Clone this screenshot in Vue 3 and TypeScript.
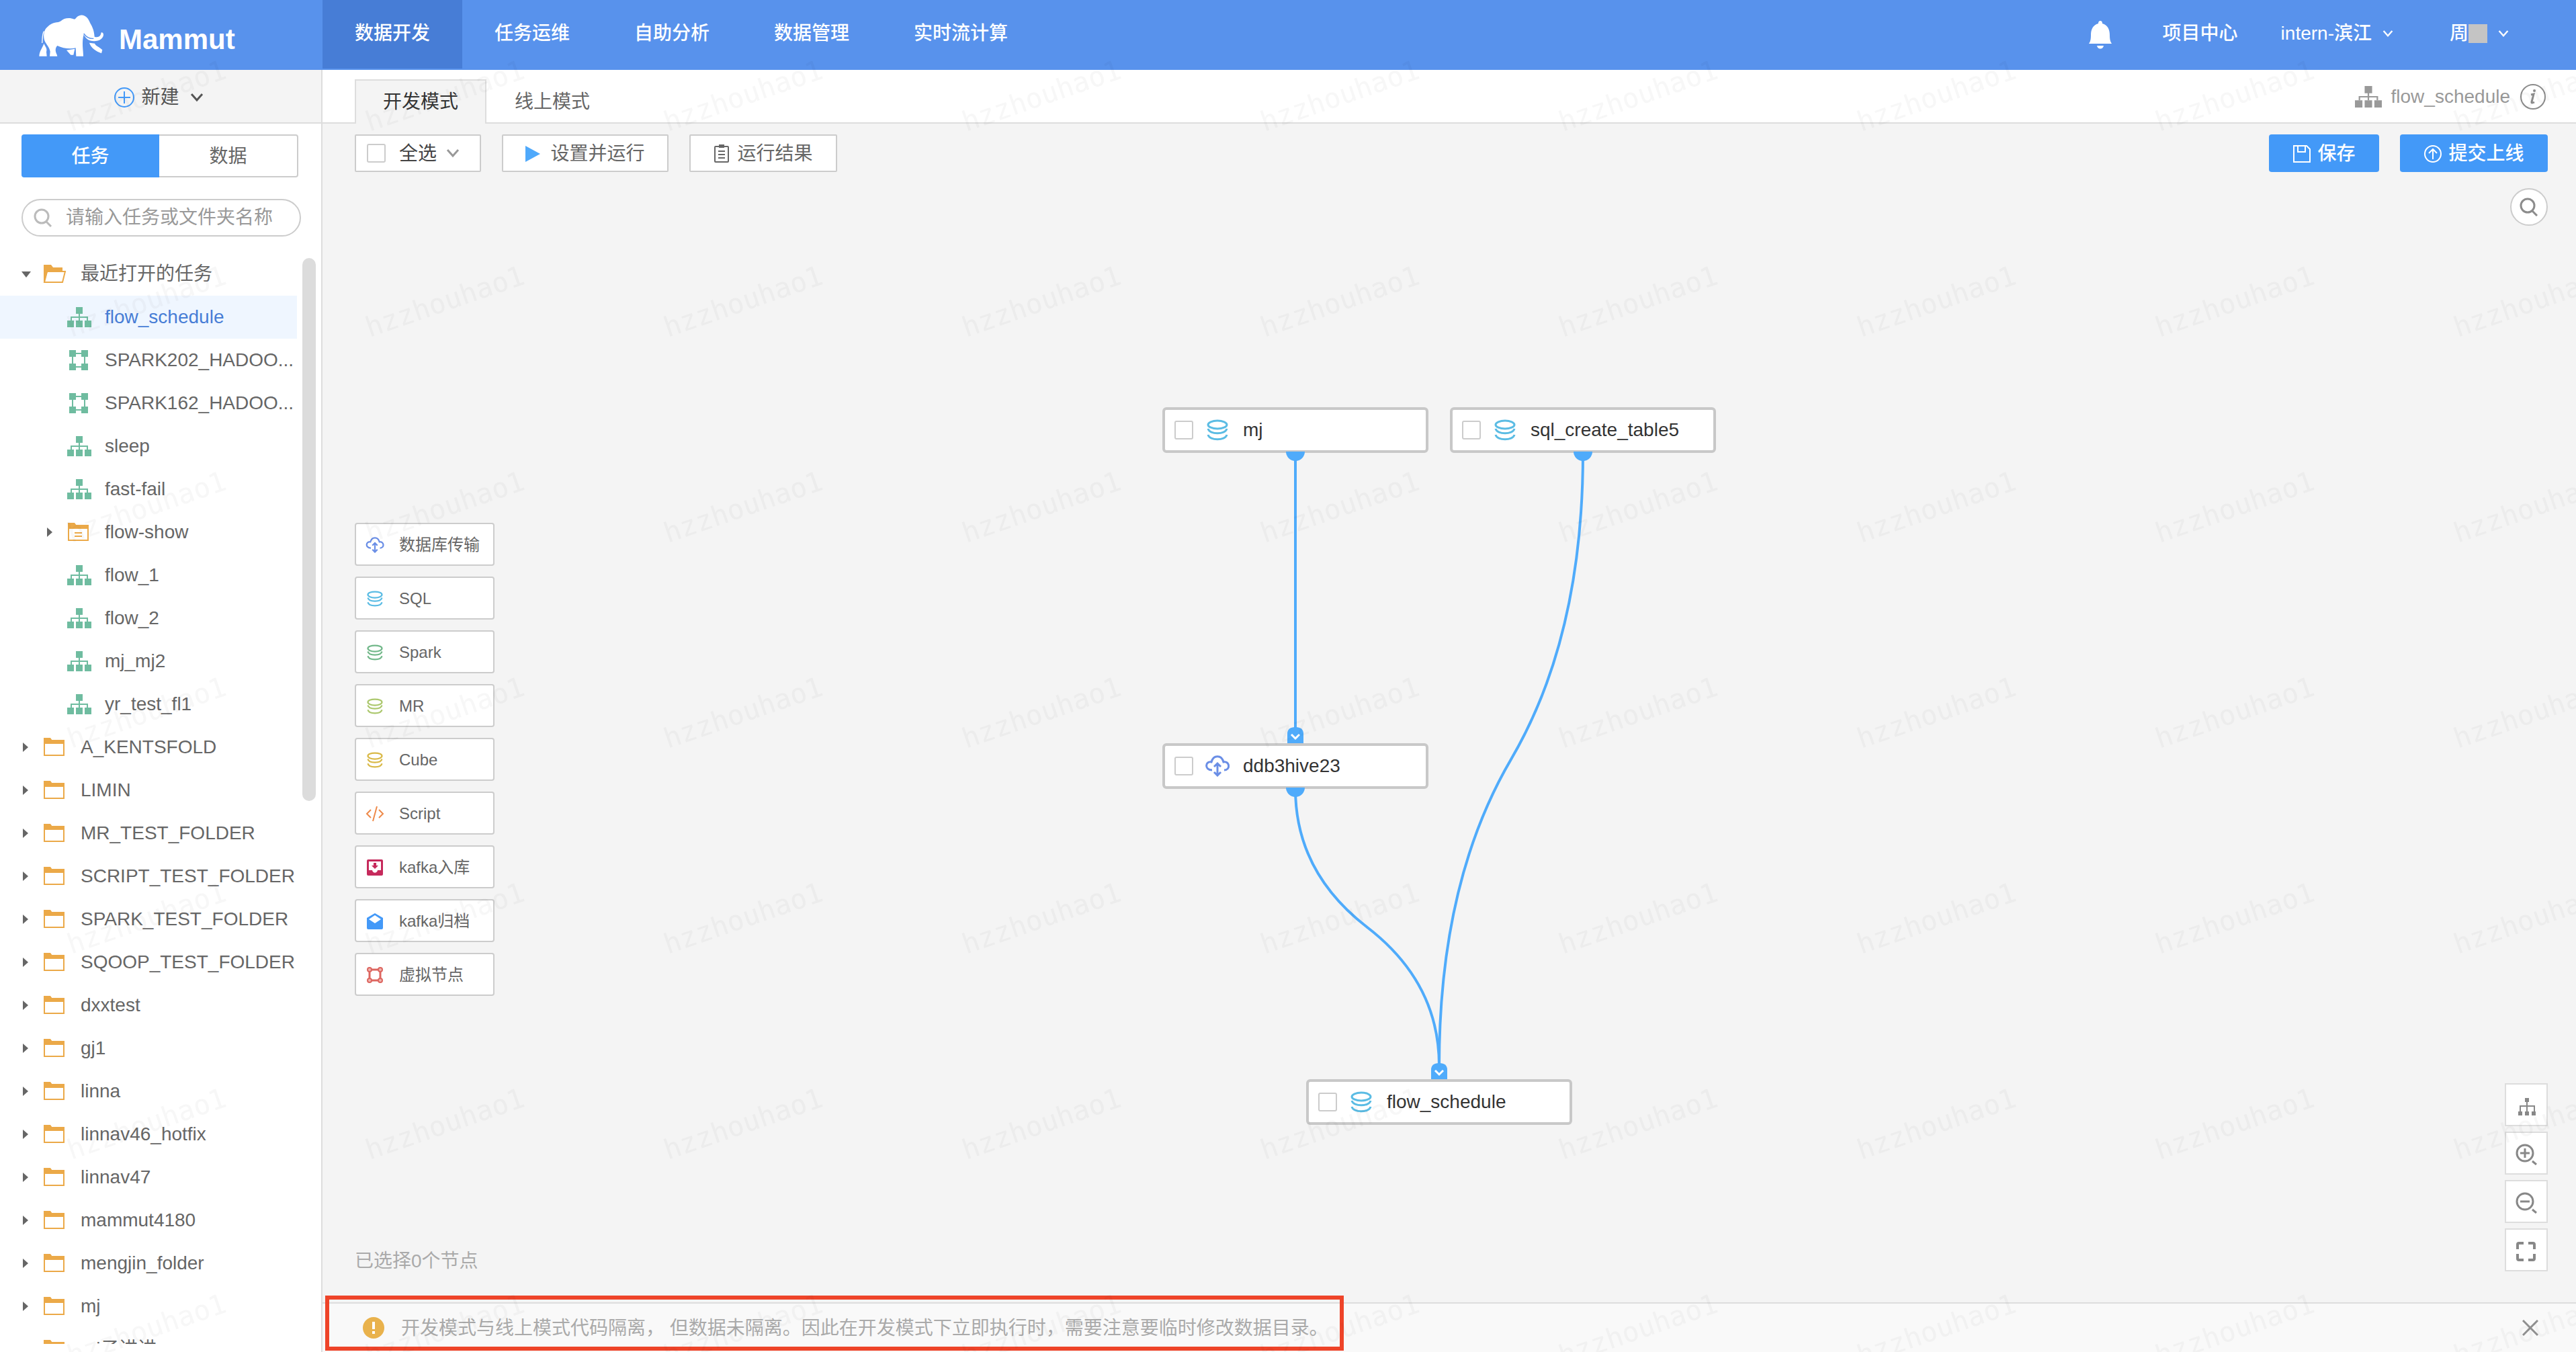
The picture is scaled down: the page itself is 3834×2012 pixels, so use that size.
<script setup lang="ts">
import { ref } from 'vue'

interface TreeRow {
  name: string
  level: 0 | 1
  icon: 'folder' | 'folder-open' | 'folder-flow' | 'flow' | 'grid'
  caret?: 'open' | 'closed'
  active?: boolean
}
interface PaletteItem { name: string; icon: string; color: string }
interface FlowNode { id: string; icon: string; color: string; x: number; y: number; input: boolean; output: boolean }

const navItems = ['数据开发', '任务运维', '自助分析', '数据管理', '实时流计算']
const activeNav = ref('数据开发')
const activeMode = ref('开发模式')
const activeTab = ref('任务')
const keyword = ref('')

const flow = (name: string, active = false): TreeRow => ({ name, level: 1, icon: 'flow', active })
const folder = (name: string): TreeRow => ({ name, level: 0, icon: 'folder', caret: 'closed' })

const rows: TreeRow[] = [
  { name: '最近打开的任务', level: 0, icon: 'folder-open', caret: 'open' },
  flow('flow_schedule', true),
  { name: 'SPARK202_HADOO...', level: 1, icon: 'grid' },
  { name: 'SPARK162_HADOO...', level: 1, icon: 'grid' },
  flow('sleep'),
  flow('fast-fail'),
  { name: 'flow-show', level: 1, icon: 'folder-flow', caret: 'closed' },
  flow('flow_1'),
  flow('flow_2'),
  flow('mj_mj2'),
  flow('yr_test_fl1'),
  ...['A_KENTSFOLD', 'LIMIN', 'MR_TEST_FOLDER', 'SCRIPT_TEST_FOLDER', 'SPARK_TEST_FOLDER',
    'SQOOP_TEST_FOLDER', 'dxxtest', 'gj1', 'linna', 'linnav46_hotfix', 'linnav47',
    'mammut4180', 'mengjin_folder', 'mj', 'mj子进进'].map(folder),
]

const palette: PaletteItem[] = [
  { name: '数据库传输', icon: 'cloud', color: '#6a8ee6' },
  { name: 'SQL', icon: 'db', color: '#5bbce4' },
  { name: 'Spark', icon: 'db', color: '#72b88a' },
  { name: 'MR', icon: 'db', color: '#acc86e' },
  { name: 'Cube', icon: 'db', color: '#d9b948' },
  { name: 'Script', icon: 'code', color: '#ee8a4a' },
  { name: 'kafka入库', icon: 'inbox', color: '#c62a5c' },
  { name: 'kafka归档', icon: 'mail', color: '#4399f8' },
  { name: '虚拟节点', icon: 'virtual', color: '#dd6660' },
]

const NODE_W = 396
const NODE_H = 68
const nodes: FlowNode[] = [
  { id: 'mj', icon: 'db', color: '#5bbce4', x: 1250, y: 350, input: false, output: true },
  { id: 'sql_create_table5', icon: 'db', color: '#5bbce4', x: 1678, y: 350, input: false, output: true },
  { id: 'ddb3hive23', icon: 'cloud', color: '#6a8ee6', x: 1250, y: 850, input: true, output: true },
  { id: 'flow_schedule', icon: 'db', color: '#5bbce4', x: 1464, y: 1350, input: true, output: false },
]
const links: [string, string][] = [
  ['mj', 'ddb3hive23'],
  ['ddb3hive23', 'flow_schedule'],
  ['sql_create_table5', 'flow_schedule'],
]

// Two mirrored quadratic arcs that meet halfway between the ports.
function linkPath([from, to]: [string, string]): string {
  const a = nodes.find(n => n.id === from)!
  const b = nodes.find(n => n.id === to)!
  const x1 = a.x + NODE_W / 2
  const y1 = a.y + NODE_H
  const x2 = b.x + NODE_W / 2
  const y2 = b.y - 20
  const bend = (y2 - y1) * 0.3
  return `M${x1} ${y1}Q${x1} ${y1 + bend} ${(x1 + x2) / 2} ${(y1 + y2) / 2}Q${x2} ${y2 - bend} ${x2} ${y2}`
}

const viewTools = [
  { icon: 'org', label: '自动布局' },
  { icon: 'zoom-in', label: '放大' },
  { icon: 'zoom-out', label: '缩小' },
  { icon: 'full', label: '全屏' },
]
</script>

<template>
  <div class="app">
    <svg class="defs" aria-hidden="true">
      <symbol id="i-chev" viewBox="0 0 20 14"><path d="M2 2l8 9 8-9" fill="none" stroke="currentColor" stroke-width="3" /></symbol>
      <symbol id="i-flow" viewBox="0 0 36 30">
        <path d="M18 9v10M6 20v-5h24v5M18 15v5" fill="none" stroke="currentColor" stroke-width="2" />
        <path d="M13 0h10v10H13zM0 20h10v10H0zM13 20h10v10H13zM26 20h10v10H26z" fill="currentColor" />
      </symbol>
      <symbol id="i-grid" viewBox="0 0 36 30">
        <path d="M8 5h18v20H8z" fill="none" stroke="currentColor" stroke-width="2" />
        <path d="M3 0h10v10H3zM21 0h10v10H21zM3 20h10v10H3zM21 20h10v10H21z" fill="currentColor" />
      </symbol>
      <symbol id="i-folder" viewBox="0 0 36 30">
        <path d="M2 5h29v22H2z" fill="none" stroke="currentColor" stroke-width="2" />
        <path d="M1 1h10l3 4h18v5H1z" fill="currentColor" />
      </symbol>
      <symbol id="i-folder-flow" viewBox="0 0 36 30">
        <path d="M2 5h29v22H2zM11 16h11M11 21h11" fill="none" stroke="currentColor" stroke-width="2" />
        <path d="M1 1h10l3 4h18v5H1z" fill="currentColor" />
      </symbol>
      <symbol id="i-folder-open" viewBox="0 0 36 30">
        <path d="M2 27L6 11h27l-4 16z" fill="none" stroke="currentColor" stroke-width="2" />
        <path d="M1 27V1h11l3 4h14v6H7L2 27z" fill="currentColor" />
      </symbol>
      <symbol id="i-db" viewBox="0 0 32 32">
        <g fill="none" stroke="currentColor" stroke-width="3">
          <ellipse cx="16" cy="8" rx="14" ry="6" />
          <path d="M2 14c2 9 26 9 28 0M2 23c2 9 26 9 28 0" />
        </g>
      </symbol>
      <symbol id="i-cloud" viewBox="0 0 36 32">
        <g fill="none" stroke="currentColor" stroke-width="3">
          <path d="M10 22C-2 22 0 8 9 10 12-1 24-1 27 10c9-2 11 12 1 12" />
          <path d="M18 13v17M13 17l5-5 5 5M13 25l5 5 5-5" />
        </g>
      </symbol>
      <symbol id="i-code" viewBox="0 0 28 24"><path d="M8 6l-6 6 6 6M20 6l6 6-6 6M17 1l-6 22" fill="none" stroke="currentColor" stroke-width="2" /></symbol>
      <symbol id="i-inbox" viewBox="0 0 24 24">
        <path fill-rule="evenodd" d="M2 0h20q2 0 2 2v20q0 2-2 2H2q-2 0-2-2V2q0-2 2-2zM3 3v13h5c1 5 7 5 8 0h5V3zM10 5h4v4h3l-5 5-5-5h3z" fill="currentColor" />
      </symbol>
      <symbol id="i-mail" viewBox="0 0 24 24">
        <path fill-rule="evenodd" d="M12 0l12 7v15q0 2-2 2H2q-2 0-2-2V7zM12 3L3 9l9 6 9-6z" fill="currentColor" />
      </symbol>
      <symbol id="i-virtual" viewBox="0 0 24 24">
        <g fill="#f0b5b0" stroke="currentColor" stroke-width="2">
          <path d="M4 4h16v16H4z" fill="none" stroke-width="3" />
          <circle cx="4" cy="4" r="3" /><circle cx="20" cy="4" r="3" /><circle cx="4" cy="20" r="3" /><circle cx="20" cy="20" r="3" />
        </g>
      </symbol>
      <symbol id="i-search" viewBox="0 0 28 28"><g fill="none" stroke="currentColor" stroke-width="3"><circle cx="12" cy="12" r="10" /><path d="M19 20l7 7" /></g></symbol>
      <symbol id="i-org" viewBox="0 0 32 32">
        <path d="M17 10v14M7 24v-8h21v8" fill="none" stroke="currentColor" stroke-width="2" />
        <path d="M14 4h6v6h-6zM4 24h6v6H4zM14 24h6v6h-6zM24 24h6v6h-6z" fill="currentColor" />
      </symbol>
      <symbol id="i-zoom-in" viewBox="0 0 32 32"><path d="M25 26l6 5M7 14h14M14 7v14" fill="none" stroke="currentColor" stroke-width="3" /><circle cx="14" cy="14" r="12" fill="none" stroke="currentColor" stroke-width="3" /></symbol>
      <symbol id="i-zoom-out" viewBox="0 0 32 32"><path d="M25 26l6 5M7 14h14" fill="none" stroke="currentColor" stroke-width="3" /><circle cx="14" cy="14" r="12" fill="none" stroke="currentColor" stroke-width="3" /></symbol>
      <symbol id="i-full" viewBox="0 0 32 32"><path d="M3 13V6q0-2 2-2h7M19 4h7q2 0 2 2v7M28 20v7q0 2-2 2h-7M12 29H5q-2 0-2-2v-7" fill="none" stroke="currentColor" stroke-width="4" /></symbol>
    </svg>

    <header class="topbar">
      <a class="brand" href="#">
        <svg class="elephant" viewBox="0 0 345 234" aria-hidden="true">
          <g fill="#fff">
            <path d="M72 209L74 188C70 168 58 158 50 142 42 122 44 92 62 78 84 54 108 62 122 52 136 36 164 36 182 44 190 42 192 28 210 26 236 24 246 46 252 60 264 80 270 96 272 122 288 128 300 120 302 103 308 102 311 106 312 112 312 130 294 142 270 142 246 142 232 130 224 112 214 150 222 178 222 209H190L188 172C164 178 130 174 106 162 94 174 98 190 104 202L106 209z" />
            <path d="M25 209C26 184 40 172 46 152 52 166 62 174 57 190L59 209zM147 182L184 176 178 203H166zM249 149L273 152C278 165 296 168 307 181L303 196C278 186 256 172 249 149z" />
          </g>
          <path d="M46 98C38 112 40 134 38 150" fill="none" stroke="#fff" stroke-width="4" />
          <path d="M224 108C234 122 248 132 268 130" fill="none" stroke="#5892ec" stroke-width="4" />
        </svg>
        <span>Mammut</span>
      </a>
      <nav class="nav">
        <a v-for="item in navItems" :key="item" href="#" :class="{ on: item === activeNav }" @click.prevent="activeNav = item">{{ item }}</a>
      </nav>
      <div class="account">
        <button class="bell" aria-label="通知">
          <svg width="34" height="42" viewBox="0 0 34 42"><path d="M17 0q3 0 3 4c8 2 11 9 11 17 0 7 1 10 3 13H0c2-3 3-6 3-13C3 13 6 6 14 4q0-4 3-4zM12 37h10c-1 6-9 6-10 0z" fill="#fff" /></svg>
        </button>
        <a href="#">项目中心</a>
        <button>intern-滨江<svg class="chev"><use href="#i-chev" /></svg></button>
        <button class="user">周<i class="mask"></i><svg class="chev"><use href="#i-chev" /></svg></button>
      </div>
    </header>

    <div class="body">
      <aside class="side">
        <button class="create">
          <svg width="32" height="32" viewBox="0 0 32 32" fill="none" stroke="#4399f8" stroke-width="2"><circle cx="16" cy="16" r="14" /><path d="M16 7v18M7 16h18" /></svg>
          <span>新建</span>
          <svg class="chev big"><use href="#i-chev" /></svg>
        </button>
        <div class="seg">
          <button v-for="t in ['任务', '数据']" :key="t" :class="{ on: t === activeTab }" @click="activeTab = t">{{ t }}</button>
        </div>
        <label class="search">
          <svg width="28" height="28"><use href="#i-search" /></svg>
          <input v-model="keyword" type="text" placeholder="请输入任务或文件夹名称" aria-label="请输入任务或文件夹名称">
        </label>
        <div class="treebox">
          <ul class="tree">
            <li v-for="r in rows" :key="r.level + r.name">
              <a href="#" :class="['row', 'lv' + r.level, { on: r.active }]">
                <span class="caret"><i v-if="r.caret" :class="r.caret"></i></span>
                <svg :class="['ticon', r.icon.startsWith('folder') ? 'orange' : 'green']"><use :href="'#i-' + r.icon" /></svg>
                <span>{{ r.name }}</span>
              </a>
            </li>
          </ul>
          <div class="thumb"></div>
        </div>
      </aside>

      <main class="main">
        <div class="modes">
          <button v-for="m in ['开发模式', '线上模式']" :key="m" :class="['mode', { on: m === activeMode }]" @click="activeMode = m">{{ m }}</button>
          <div class="current">
            <svg width="40" height="32" viewBox="0 0 36 30" preserveAspectRatio="none"><use href="#i-flow" /></svg>
            <span>flow_schedule</span>
            <svg width="40" height="40" viewBox="0 0 40 40" fill="none" stroke="#8c8c8c" stroke-width="2">
              <circle cx="20" cy="20" r="18" /><path d="M17 17l4-1-3 12q0 2 4 0" stroke-width="3" /><circle cx="22" cy="11" r="2" fill="#8c8c8c" stroke="none" />
            </svg>
          </div>
        </div>

        <div class="tools">
          <label class="btn all">
            <input type="checkbox" class="check"><span>全选</span><svg class="chev big grey"><use href="#i-chev" /></svg>
          </label>
          <button class="btn run">
            <svg width="22" height="24" viewBox="0 0 22 24"><path d="M0 0l22 12L0 24z" fill="#4fa9fb" /></svg><span>设置并运行</span>
          </button>
          <button class="btn result">
            <svg width="24" height="28" viewBox="0 0 24 28" fill="none" stroke="#666" stroke-width="2"><rect x="2" y="3" width="20" height="23" rx="1" /><path d="M7 10h10M7 15h10M7 20h10" /><path d="M8 0h8v5H8z" fill="#666" stroke="none" /></svg><span>运行结果</span>
          </button>
          <span class="grow"></span>
          <button class="btn primary save">
            <svg width="28" height="28" viewBox="0 0 28 28" fill="none" stroke="#fff" stroke-width="2"><path d="M2 2h19l5 5v19H2zM8 2v9h11V2" /></svg><span>保存</span>
          </button>
          <button class="btn primary submit">
            <svg width="28" height="28" viewBox="0 0 28 28" fill="none" stroke="#fff" stroke-width="2"><circle cx="14" cy="14" r="12" /><path d="M14 22V8M8 13l6-6 6 6" /></svg><span>提交上线</span>
          </button>
        </div>

        <div class="stage">
          <div class="graph">
            <svg class="links" width="100%" height="100%" aria-hidden="true">
              <path v-for="l in links" :key="l.join()" :d="linkPath(l)" fill="none" stroke="#4fabfb" stroke-width="4" />
            </svg>
            <div v-for="n in nodes" :key="n.id" class="node" :style="{ left: n.x + 'px', top: n.y + 'px' }">
              <svg v-if="n.input" class="port in" viewBox="0 0 24 24"><path d="M0 24V10Q0 0 12 0t12 10v14z" fill="#4fabfb" /><path d="M6 11l6 6 6-6" fill="none" stroke="#fff" stroke-width="3" /></svg>
              <svg v-if="n.output" class="port out" viewBox="0 0 28 14"><path d="M0 0h28a14 14 0 0 1-28 0z" fill="#4fabfb" /></svg>
              <label>
                <input type="checkbox" class="check">
                <svg class="nicon" :style="{ color: n.color }"><use :href="'#i-' + n.icon" /></svg>
                <span>{{ n.id }}</span>
              </label>
            </div>
          </div>

          <div class="rail left">
            <button v-for="p in palette" :key="p.name" class="item">
              <svg class="picon" :style="{ color: p.color }"><use :href="'#i-' + p.icon" /></svg><span>{{ p.name }}</span>
            </button>
            <p class="status">已选择0个节点</p>
          </div>
          <div class="rail right">
            <button class="find" aria-label="搜索"><svg width="28" height="28"><use href="#i-search" /></svg></button>
            <button v-for="t in viewTools" :key="t.icon" class="vt" :aria-label="t.label"><svg width="32" height="32"><use :href="'#i-' + t.icon" /></svg></button>
          </div>
        </div>

        <footer class="notice">
          <svg width="32" height="32" viewBox="0 0 32 32"><circle cx="16" cy="16" r="16" fill="#e9b24c" /><path d="M16 7v11M16 21v4" stroke="#fff" stroke-width="4" /></svg>
          <p>开发模式与线上模式代码隔离， 但数据未隔离。因此在开发模式下立即执行时，需要注意要临时修改数据目录。</p>
          <button class="close" aria-label="关闭"><svg width="24" height="24" viewBox="0 0 24 24"><path d="M1 1l22 22M23 1L1 23" stroke="#8f8f8f" stroke-width="3" /></svg></button>
          <div class="frame"></div>
        </footer>
      </main>
    </div>

    <svg class="watermark" width="100%" height="100%" aria-hidden="true">
      <pattern id="wm" width="444" height="306" patternUnits="userSpaceOnUse">
        <text x="0" y="0" transform="translate(106 196) rotate(-19)">hzzhouhao1</text>
      </pattern>
      <rect width="100%" height="100%" fill="url(#wm)" />
    </svg>
  </div>
</template>

<style>
body { margin: 0; background: #f4f4f4; }
</style>

<style scoped>
.app {
  position: relative; display: flex; flex-direction: column; height: 100vh; overflow: hidden;
  font-family: "Liberation Sans", "Noto Sans CJK SC", sans-serif; font-size: 28px; line-height: 40px; color: #666;
}
.app *, .app *::before { box-sizing: border-box; }
button, input { font: inherit; color: inherit; margin: 0; padding: 0; border: 0; background: none; }
button { cursor: pointer; }
a { color: inherit; text-decoration: none; }
svg { display: block; flex: none; }
span { white-space: nowrap; }
.defs { position: absolute; width: 0; height: 0; }
.chev { width: 16px; height: 12px; }
.chev.big { width: 20px; height: 14px; }
.grey { color: #999; }
.grow { flex: 1; }

.topbar { display: flex; flex: none; height: 104px; background: #5892ec; color: #fff; font-weight: 500; }
.brand { display: flex; width: 480px; padding-left: 50px; }
.elephant { width: 115px; height: 78px; margin-top: 14px; }
.brand span { margin-left: 12px; padding-top: 10px; font-size: 42px; line-height: 98px; font-weight: 700; }
.nav { display: flex; }
.nav a { height: 102px; padding: 0 48px; line-height: 100px; }
.nav a.on { background: #477dd6; }
.account { display: flex; align-items: center; height: 100px; gap: 64px; margin-left: auto; padding-right: 100px; }
.account button { display: flex; align-items: center; gap: 16px; }
.account .bell { margin: 4px 12px 0 0; }
.account .user { margin-left: 20px; gap: 0; }
.mask { width: 28px; height: 28px; margin-right: 16px; background: #c4c4c4; }

.body { display: flex; flex: 1; min-height: 0; }
.side { display: flex; flex-direction: column; flex: none; width: 480px; padding-bottom: 12px; border-right: 2px solid #ddd; background: #fff; }
.side .create {
  display: flex; flex: none; align-items: center; justify-content: center; height: 80px; padding: 4px 6px 0 0;
  background: #f4f4f4; border-bottom: 2px solid #ddd; color: #555;
}
.create span { margin: 0 16px 0 9px; }
.seg { display: flex; flex: none; height: 64px; margin: 16px 34px 0 32px; }
.seg button { flex: 1; padding-top: 2px; background: #fff; border: 2px solid #ccc; border-left: 0; border-radius: 0 4px 4px 0; }
.seg button.on { background: #4399f8; border: 0; border-radius: 4px 0 0 4px; color: #fff; font-weight: 500; }
.search { display: flex; flex: none; align-items: center; gap: 20px; height: 56px; margin: 32px 30px 20px 32px; padding: 0 16px; border: 2px solid #ccc; border-radius: 28px; color: #bbb; }
.search input { flex: 1; min-width: 0; outline: 0; }
.search input::placeholder { color: #999; opacity: 1; }
.treebox { position: relative; flex: 1; min-height: 0; overflow: hidden; padding-top: 4px; }
.tree { margin: 0; padding: 0; list-style: none; }
.row { display: flex; align-items: center; height: 64px; width: 442px; }
.row.on { background: #eff6ff; color: #477dd6; }
.lv0 { padding-left: 32px; }
.lv1 { padding-left: 68px; }
.caret { width: 32px; }
.caret i { display: block; width: 0; height: 0; border: 7px solid transparent; }
.caret .open { border-top: 9px solid #666; border-bottom: 0; }
.caret .closed { margin-left: 2px; border-left: 8px solid #666; border-right: 0; }
.ticon { width: 36px; height: 30px; margin-right: 20px; }
.orange { color: #eba948; }
.green { color: #6fbca0; }
.thumb { position: absolute; top: 12px; right: 8px; width: 20px; height: 808px; border-radius: 10px; background: #dcdcdc; }

.main { display: flex; flex-direction: column; flex: 1; min-width: 0; background: #f4f4f4; }
.modes { display: flex; flex: none; align-items: flex-end; height: 80px; padding: 0 44px 0 48px; background: #fff; box-shadow: inset 0 -2px #ddd; }
.mode { width: 196px; height: 66px; border: 2px solid transparent; border-bottom: 0; }
.mode.on { background: #f4f4f4; border-color: #ddd; color: #333; }
.current { display: flex; align-items: center; gap: 14px; height: 80px; margin-left: auto; color: #999; }

.tools { display: flex; flex: none; gap: 31px; padding: 16px 42px 0 48px; }
.btn { display: flex; align-items: center; justify-content: center; height: 56px; padding-top: 2px; background: #fff; border: 2px solid #ccc; border-radius: 2px; }
.all { justify-content: flex-start; width: 188px; padding: 0 0 0 16px; color: #444; }
.all span { margin: 0 14px 0 20px; padding-top: 2px; }
.run { width: 248px; gap: 15px; }
.result { width: 220px; gap: 11px; }
.primary { background: #4399f8; border: 0; border-radius: 4px; color: #fff; font-weight: 500; gap: 9px; }
.save { width: 164px; }
.submit { width: 220px; }
.check { appearance: none; flex: none; width: 28px; height: 28px; border: 2px solid #ccc; border-radius: 3px; background: #fff; }

.stage { position: relative; display: flex; flex: 1; justify-content: space-between; min-height: 0; }
.graph { position: absolute; inset: 0; overflow: hidden; }
.node { position: absolute; width: 396px; height: 68px; border: 4px solid #c8c8c8; border-radius: 6px; background: #fff; color: #333; }
.node label { display: flex; align-items: center; height: 100%; padding-left: 14px; }
.nicon { width: 36px; height: 32px; margin: 0 20px 0 18px; }
.port { position: absolute; left: 50%; }
.port.in { bottom: 100%; width: 24px; height: 24px; margin: 0 0 4px -12px; }
.port.out { top: 100%; width: 28px; height: 14px; margin: 2px 0 0 -14px; }
.rail { position: relative; display: flex; flex-direction: column; }
.left { padding: 522px 0 44px 48px; gap: 16px; }
.item { display: flex; align-items: center; flex: none; width: 208px; height: 64px; padding: 2px 0 0 14px; background: #fff; border: 2px solid #ccc; border-radius: 4px; font-size: 24px; }
.picon { width: 28px; height: 24px; margin-right: 22px; }
.status { margin: auto 0 0; line-height: 34px; color: #aaa; }
.right { align-items: flex-end; gap: 8px; padding: 24px 42px 46px 0; }
.find { display: flex; align-items: center; justify-content: center; width: 56px; height: 56px; margin-bottom: auto; border: 2px solid #ccc; border-radius: 50%; background: #fff; color: #8c8c8c; }
.vt { display: flex; align-items: center; justify-content: center; flex: none; width: 64px; height: 64px; padding-top: 4px; border: 2px solid #ddd; background: #fff; color: #888; }

.notice { position: relative; display: flex; flex: none; align-items: center; gap: 25px; height: 74px; padding: 0 56px 0 60px; border-top: 2px solid #ddd; background: #f9f9f9; color: #aaa; }
.notice p { margin: 0; padding-top: 2px; white-space: nowrap; }
.close { margin-left: auto; }
.frame { position: absolute; left: 4px; top: -12px; width: 1516px; height: 82px; border: 6px solid #ee4429; pointer-events: none; }

.watermark { position: absolute; inset: 0; pointer-events: none; }
.watermark text { font-family: "DejaVu Sans Mono", monospace; font-size: 41px; fill: #000; fill-opacity: 0.03; }
</style>
